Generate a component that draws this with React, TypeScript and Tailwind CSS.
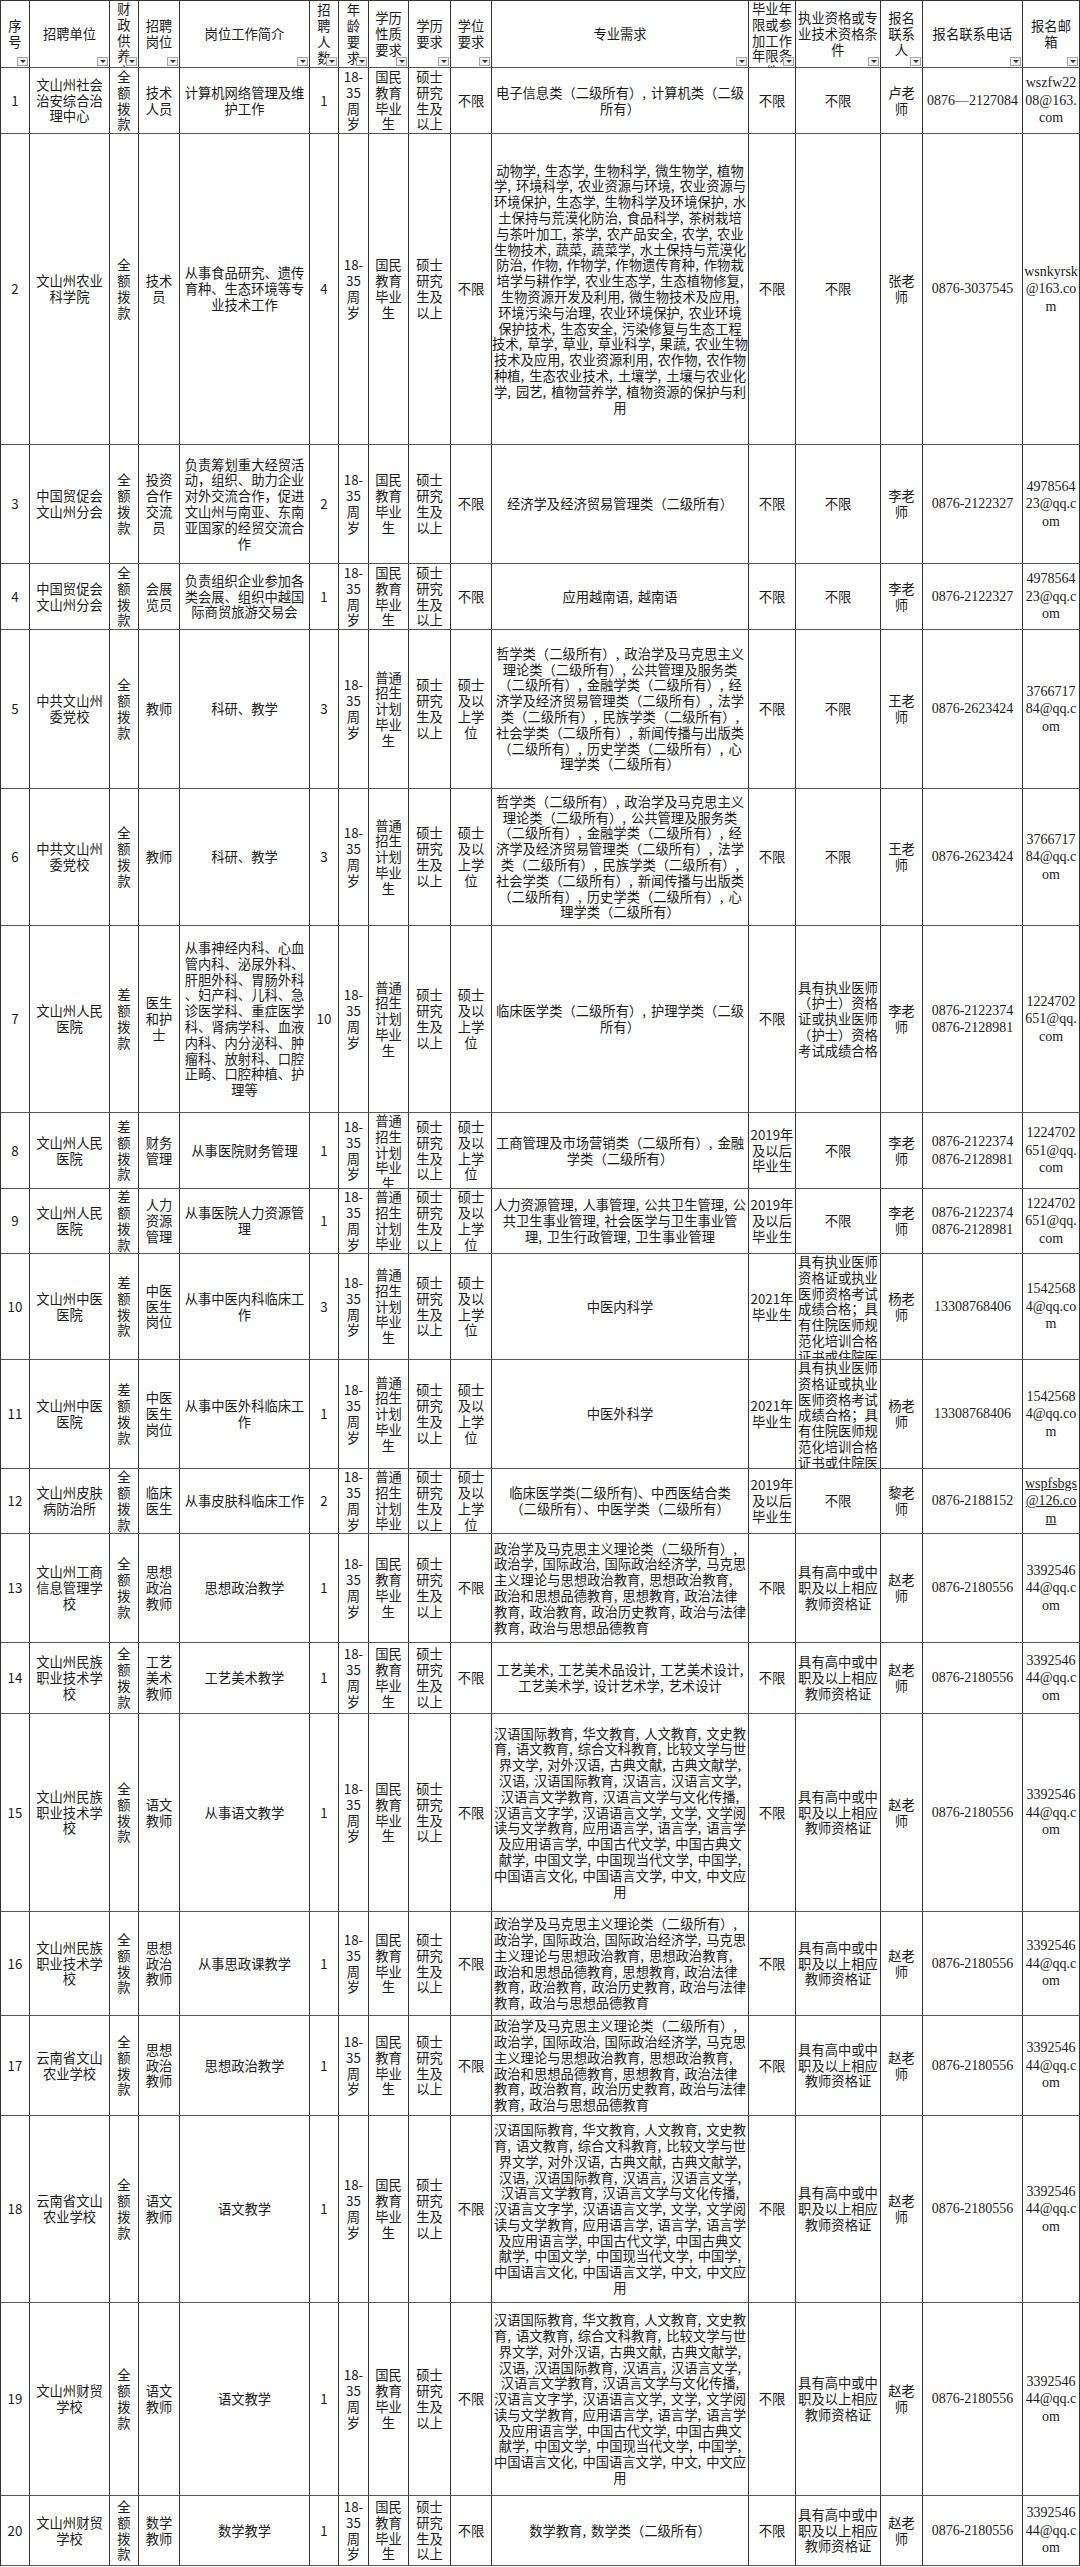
const COLS = [
  'w-[29px]', 'w-[80px]', 'w-[29px]', 'w-[41px]', 'w-[130px]', 'w-[29px]', 'w-[30px]', 'w-[40px]',
  'w-[42px]', 'w-[41px]', 'w-[257px]', 'w-[47px]', 'w-[85px]', 'w-[42px]', 'w-[100px]', 'w-[57px]',
]

const HEAD = [
  '序\n号', '招聘单位', '财\n政\n供\n养\n方\n式', '招聘\n岗位', '岗位工作简介', '招\n聘\n人\n数', '年\n龄\n要\n求',
  '学历\n性质\n要求', '学历\n要求', '学位\n要求', '专业需求', '毕业年\n限或参\n加工作\n年限条\n件',
  '执业资格或专\n业技术资格条\n件', '报名\n联系\n人', '报名联系电话', '报名邮\n箱',
]

const AGE = '18-\n35\n周\n岁'
const GM = '国民\n教育\n毕业\n生'
const PT = '普通\n招生\n计划\n毕业\n生'
const SS = '硕士\n研究\n生及\n以上'
const SW = '硕士\n及以\n上学\n位'
const QE = '全\n额\n拨\n款'
const CE = '差\n额\n拨\n款'
const BX = '不限'
const TEACH = '具有高中或中\n职及以上相应\n教师资格证'
const ZHAO = ['赵老\n师', '0876-2180556', '3392546\n44@qq.c\nom']
const LI2 = ['李老\n师', '0876-2122374\n0876-2128981', '1224702\n651@qq.\ncom']
const Y2019 = '2019年\n及以后\n毕业生'

const NONG =
  '动物学, 生态学, 生物科学, 微生物学, 植物\n学, 环境科学, 农业资源与环境, 农业资源与\n环境保护, 生态学, 生物科学及环境保护, 水\n土保持与荒漠化防治, 食品科学, 茶树栽培\n与茶叶加工, 茶学, 农产品安全, 农学, 农业\n生物技术, 蔬菜, 蔬菜学, 水土保持与荒漠化\n防治, 作物, 作物学, 作物遗传育种, 作物栽\n培学与耕作学, 农业生态学, 生态植物修复,\n生物资源开发及利用, 微生物技术及应用,\n环境污染与治理, 农业环境保护, 农业环境\n保护技术, 生态安全, 污染修复与生态工程\n技术, 草学, 草业, 草业科学, 果蔬, 农业生物\n技术及应用, 农业资源利用, 农作物, 农作物\n种植, 生态农业技术, 土壤学, 土壤与农业化\n学, 园艺, 植物营养学, 植物资源的保护与利\n用'
const PHIL =
  '哲学类（二级所有）, 政治学及马克思主义\n理论类（二级所有）, 公共管理及服务类\n（二级所有）, 金融学类（二级所有）, 经\n济学及经济贸易管理类（二级所有）, 法学\n类（二级所有）, 民族学类（二级所有）,\n社会学类（二级所有）, 新闻传播与出版类\n（二级所有）, 历史学类（二级所有）, 心\n理学类（二级所有）'
const POLI =
  '政治学及马克思主义理论类（二级所有）,\n政治学, 国际政治, 国际政治经济学, 马克思\n主义理论与思想政治教育, 思想政治教育,\n政治和思想品德教育, 思想教育, 政治法律\n教育, 政治教育, 政治历史教育, 政治与法律\n教育, 政治与思想品德教育'
const CHN =
  '汉语国际教育, 华文教育, 人文教育, 文史教\n育, 语文教育, 综合文科教育, 比较文学与世\n界文学, 对外汉语, 古典文献, 古典文献学,\n汉语, 汉语国际教育, 汉语言, 汉语言文学,\n汉语言文学教育, 汉语言文学与文化传播,\n汉语言文字学, 汉语语言文学, 文学, 文学阅\n读与文学教育, 应用语言学, 语言学, 语言学\n及应用语言学, 中国古代文学, 中国古典文\n献学, 中国文学, 中国现当代文学, 中国学,\n中国语言文化, 中国语言文学, 中文, 中文应\n用'
const MED =
  '从事神经内科、心血\n管内科、泌尿外科、\n肝胆外科、胃肠外科\n、妇产科、儿科、急\n诊医学科、重症医学\n科、肾病学科、血液\n内科、内分泌科、肿\n瘤科、放射科、口腔\n正畸、口腔种植、护\n理等'
const DOC =
  '具有执业医师\n资格证或执业\n医师资格考试\n成绩合格；具\n有住院医师规\n范化培训合格\n证书或住院医\n师规范化培训'

interface Row {
  h: string
  cells: string[]
  left?: boolean
  link?: boolean
}

const ROWS: Row[] = [
  { h: 'h-[66px]', cells: ['1', '文山州社会\n治安综合治\n理中心', QE, '技术\n人员', '计算机网络管理及维\n护工作', '1', AGE, GM, SS, BX, '电子信息类（二级所有）, 计算机类（二级\n所有）', BX, BX, '卢老\n师', '0876—2127084', 'wszfw22\n08@163.\ncom'] },
  { h: 'h-[311px]', cells: ['2', '文山州农业\n科学院', QE, '技术\n员', '从事食品研究、遗传\n育种、生态环境等专\n业技术工作', '4', AGE, GM, SS, BX, NONG, BX, BX, '张老\n师', '0876-3037545', 'wsnkyrsk\n@163.co\nm'] },
  { h: 'h-[119px]', cells: ['3', '中国贸促会\n文山州分会', QE, '投资\n合作\n交流\n员', '负责筹划重大经贸活\n动，组织、助力企业\n对外交流合作，促进\n文山州与南亚、东南\n亚国家的经贸交流合\n作', '2', AGE, GM, SS, BX, '经济学及经济贸易管理类（二级所有）', BX, BX, '李老\n师', '0876-2122327', '4978564\n23@qq.c\nom'] },
  { h: 'h-[66px]', cells: ['4', '中国贸促会\n文山州分会', QE, '会展\n览员', '负责组织企业参加各\n类会展、组织中越国\n际商贸旅游交易会', '1', AGE, GM, SS, BX, '应用越南语, 越南语', BX, BX, '李老\n师', '0876-2122327', '4978564\n23@qq.c\nom'] },
  { h: 'h-[159px]', cells: ['5', '中共文山州\n委党校', QE, '教师', '科研、教学', '3', AGE, PT, SS, SW, PHIL, BX, BX, '王老\n师', '0876-2623424', '3766717\n84@qq.c\nom'] },
  { h: 'h-[137px]', cells: ['6', '中共文山州\n委党校', QE, '教师', '科研、教学', '3', AGE, PT, SS, SW, PHIL, BX, BX, '王老\n师', '0876-2623424', '3766717\n84@qq.c\nom'] },
  { h: 'h-[187px]', cells: ['7', '文山州人民\n医院', CE, '医生\n和护\n士', MED, '10', AGE, PT, SS, SW, '临床医学类（二级所有）, 护理学类（二级\n所有）', BX, '具有执业医师\n（护士）资格\n证或执业医师\n（护士）资格\n考试成绩合格', ...LI2] },
  { h: 'h-[76px]', cells: ['8', '文山州人民\n医院', CE, '财务\n管理', '从事医院财务管理', '1', AGE, PT, SS, SW, '工商管理及市场营销类（二级所有）, 金融\n学类（二级所有）', Y2019, BX, ...LI2] },
  { h: 'h-[65px]', cells: ['9', '文山州人民\n医院', CE, '人力\n资源\n管理', '从事医院人力资源管\n理', '1', AGE, PT, SS, SW, '人力资源管理, 人事管理, 公共卫生管理, 公\n共卫生事业管理, 社会医学与卫生事业管\n理, 卫生行政管理, 卫生事业管理', Y2019, BX, ...LI2] },
  { h: 'h-[106px]', cells: ['10', '文山州中医\n医院', CE, '中医\n医生\n岗位', '从事中医内科临床工\n作', '3', AGE, PT, SS, SW, '中医内科学', '2021年\n毕业生', DOC, '杨老\n师', '13308768406', '1542568\n4@qq.co\nm'] },
  { h: 'h-[109px]', cells: ['11', '文山州中医\n医院', CE, '中医\n医生\n岗位', '从事中医外科临床工\n作', '1', AGE, PT, SS, SW, '中医外科学', '2021年\n毕业生', DOC, '杨老\n师', '13308768406', '1542568\n4@qq.co\nm'] },
  { h: 'h-[65px]', link: true, cells: ['12', '文山州皮肤\n病防治所', QE, '临床\n医生', '从事皮肤科临床工作', '2', AGE, PT, SS, SW, '临床医学类(二级所有)、中西医结合类\n（二级所有）、中医学类（二级所有）', Y2019, BX, '黎老\n师', '0876-2188152', 'wspfsbgs\n@126.co\nm'] },
  { h: 'h-[109px]', left: true, cells: ['13', '文山州工商\n信息管理学\n校', QE, '思想\n政治\n教师', '思想政治教学', '1', AGE, GM, SS, BX, POLI, BX, TEACH, ...ZHAO] },
  { h: 'h-[71px]', cells: ['14', '文山州民族\n职业技术学\n校', QE, '工艺\n美术\n教师', '工艺美术教学', '1', AGE, GM, SS, BX, '工艺美术, 工艺美术品设计, 工艺美术设计,\n工艺美术学, 设计艺术学, 艺术设计', BX, TEACH, ...ZHAO] },
  { h: 'h-[198px]', cells: ['15', '文山州民族\n职业技术学\n校', QE, '语文\n教师', '从事语文教学', '1', AGE, GM, SS, BX, CHN, BX, TEACH, ...ZHAO] },
  { h: 'h-[104px]', left: true, cells: ['16', '文山州民族\n职业技术学\n校', QE, '思想\n政治\n教师', '从事思政课教学', '1', AGE, GM, SS, BX, POLI, BX, TEACH, ...ZHAO] },
  { h: 'h-[100px]', left: true, cells: ['17', '云南省文山\n农业学校', QE, '思想\n政治\n教师', '思想政治教学', '1', AGE, GM, SS, BX, POLI, BX, TEACH, ...ZHAO] },
  { h: 'h-[187px]', cells: ['18', '云南省文山\n农业学校', QE, '语文\n教师', '语文教学', '1', AGE, GM, SS, BX, CHN, BX, TEACH, ...ZHAO] },
  { h: 'h-[193px]', cells: ['19', '文山州财贸\n学校', QE, '语文\n教师', '语文教学', '1', AGE, GM, SS, BX, CHN, BX, TEACH, ...ZHAO] },
  { h: 'h-[70px]', cells: ['20', '文山州财贸\n学校', QE, '数学\n教师', '数学教学', '1', AGE, GM, SS, BX, '数学教育, 数学类（二级所有）', BX, TEACH, ...ZHAO] },
]

// little filter button Excel draws in each header cell
function FilterBtn() {
  return (
    <span className="absolute right-[1px] bottom-[1px] w-[11px] h-[9px] border border-[#a8a8a8] bg-[#f2f2f2] flex items-center justify-center">
      <span className="w-0 h-0 border-l-[3px] border-r-[3px] border-t-[3px] border-l-transparent border-r-transparent border-t-[#333]" />
    </span>
  )
}

function Cell({ text, col, left, link }: { text: string; col: number; left?: boolean; link?: boolean }) {
  const serif = col >= 14
  const major = col === 10
  const isLeft = left && major
  return (
    <div
      className={`${COLS[col]} shrink-0 h-full overflow-hidden border-r border-[#333] flex flex-col [justify-content:safe_center] ${isLeft ? 'items-start pl-[2px]' : 'items-center'}`}
    >
      <div
        className={`whitespace-pre ${isLeft ? 'text-left' : 'text-center'} ${
          serif ? "font-['Liberation_Serif',serif] text-[14px] leading-[17.5px]" : 'text-[13.3px] leading-[15.8px]'
        } ${major ? '[word-spacing:2px]' : ''} ${link && col === 15 ? 'underline' : ''}`}
      >
        {text}
      </div>
    </div>
  )
}

export default function App() {
  return (
    <div className="w-[1080px] bg-white text-[#1a1a1a] font-['Noto_Sans_CJK_SC',sans-serif]">
      <div className="border-l border-t border-[#333]">
        <div className="flex h-[67px] border-b border-[#555]">
          {HEAD.map((t, i) => (
            <div
              key={i}
              className={`${COLS[i]} relative shrink-0 h-full overflow-hidden border-r border-[#333] flex flex-col items-center [justify-content:safe_center]`}
            >
              <div className="whitespace-pre text-center text-[13.3px] leading-[15.8px]">{t}</div>
              <FilterBtn />
            </div>
          ))}
        </div>
        {ROWS.map((r, ri) => (
          <div key={ri} className={`flex border-b border-[#555] ${r.h}`}>
            {r.cells.map((c, ci) => (
              <Cell key={ci} text={c} col={ci} left={r.left} link={r.link} />
            ))}
          </div>
        ))}
      </div>
    </div>
  )
}
